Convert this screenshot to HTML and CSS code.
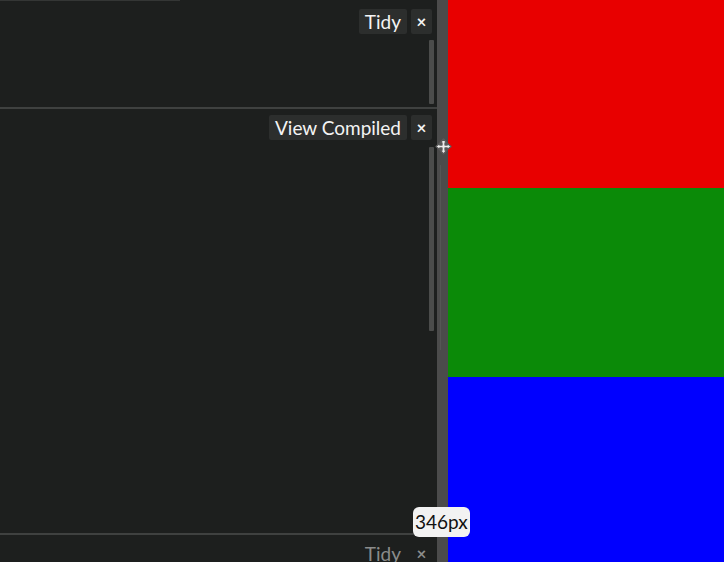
FILE: index.html
```html
<!DOCTYPE html>
<html>
<head>
<meta charset="utf-8">
<link rel="stylesheet" href="styles.css">
</head>
<body>
<div class="app">
  <div class="editors">
    <div class="topline"></div>
    <section class="pane pane-one">
      <div class="toolbar">
        <button class="btn">Tidy</button>
        <button class="btn close">&#215;</button>
      </div>
      <div class="scroll scroll-one"></div>
    </section>
    <section class="pane pane-two">
      <div class="toolbar">
        <button class="btn">View Compiled</button>
        <button class="btn close">&#215;</button>
      </div>
      <div class="scroll scroll-two"></div>
    </section>
    <section class="pane pane-three">
      <div class="toolbar dim">
        <button class="btn ghost">Tidy</button>
        <button class="btn close ghost">&#215;</button>
      </div>
    </section>
  </div>
  <div class="divider">
    <div class="divider-line"></div>
    <svg class="cursor" width="17" height="17" viewBox="0 0 17 17">
      <path d="M8.5 1 L11.8 4.8 L10 4.8 L10 7 L12.2 7 L12.2 5.2 L16 8.5 L12.2 11.8 L12.2 10 L10 10 L10 12.2 L11.8 12.2 L8.5 16 L5.2 12.2 L7 12.2 L7 10 L4.8 10 L4.8 11.8 L1 8.5 L4.8 5.2 L4.8 7 L7 7 L7 4.8 L5.2 4.8 Z" fill="#ececec" stroke="#5a5a5a" stroke-width="1.3" stroke-linejoin="round"/>
    </svg>
  </div>
  <div class="output">
    <div class="block red"></div>
    <div class="block green"></div>
    <div class="block blue"></div>
  </div>
  <div class="tip">346px</div>
</div>
</body>
</html>
```

FILE: styles.css
```css
html, body {
  margin: 0;
  padding: 0;
  background: #1d1f1e;
  overflow: hidden;
}

.app {
  position: relative;
  display: flex;
  width: 724px;
  height: 562px;
  overflow: hidden;
  font-family: Lato, "Open Sans", sans-serif;
}

.editors {
  position: relative;
  width: 437px;
  display: flex;
  flex-direction: column;
  background: #1d1f1e;
}

.topline {
  position: absolute;
  left: 0;
  top: 0;
  width: 180px;
  height: 1px;
  background: #343635;
}

.pane {
  position: relative;
  box-sizing: border-box;
  flex-shrink: 0;
}

.pane-one {
  height: 109px;
  border-bottom: 2px solid #3f4140;
}

.pane-two {
  height: 426px;
  border-bottom: 2px solid #3f4140;
}

.pane-three {
  flex: 1 1 0;
  min-height: 0;
  overflow: hidden;
}

.toolbar {
  display: flex;
  justify-content: flex-end;
  gap: 4px;
  padding: 9px 5px 0 0;
}

.pane-two .toolbar {
  padding-top: 6px;
}

.pane-three .toolbar {
  padding-top: 6px;
}

.btn {
  height: 25px;
  padding: 0 6px;
  border: none;
  border-radius: 2px;
  background: #2c2e2d;
  color: #f4f4f4;
  font-family: Lato, "Open Sans", sans-serif;
  font-size: 19px;
  line-height: 25px;
}

.close {
  width: 21px;
  padding: 0;
  font-size: 17px;
  font-weight: bold;
}

.ghost {
  background: transparent;
  color: #8b8c8b;
}

.scroll {
  position: absolute;
  left: 429px;
  width: 5px;
  background: #4b4c4b;
  border-radius: 1px;
}

.scroll-one {
  top: 40px;
  height: 64px;
}

.scroll-two {
  top: 38px;
  height: 184px;
}

.divider {
  position: relative;
  width: 11px;
  background: #4b4b4b;
}

.divider-line {
  position: absolute;
  left: 3px;
  top: 165px;
  width: 1px;
  height: 185px;
  background: #555655;
}

.cursor {
  position: absolute;
  left: -2px;
  top: 138px;
}

.output {
  flex: 1;
  display: flex;
  flex-direction: column;
}

.block {
  flex: none;
}

.red {
  height: 188px;
  background: #e80000;
}

.green {
  height: 189px;
  background: #0b8a08;
}

.blue {
  flex: 1;
  background: #0000ff;
}

.tip {
  position: absolute;
  left: 413px;
  top: 507px;
  height: 30px;
  padding: 0 2px;
  box-sizing: border-box;
  background: #f2f2f2;
  border-radius: 6px;
  color: #111;
  font-family: Lato, "Open Sans", sans-serif;
  font-size: 19px;
  line-height: 30px;
}
```
